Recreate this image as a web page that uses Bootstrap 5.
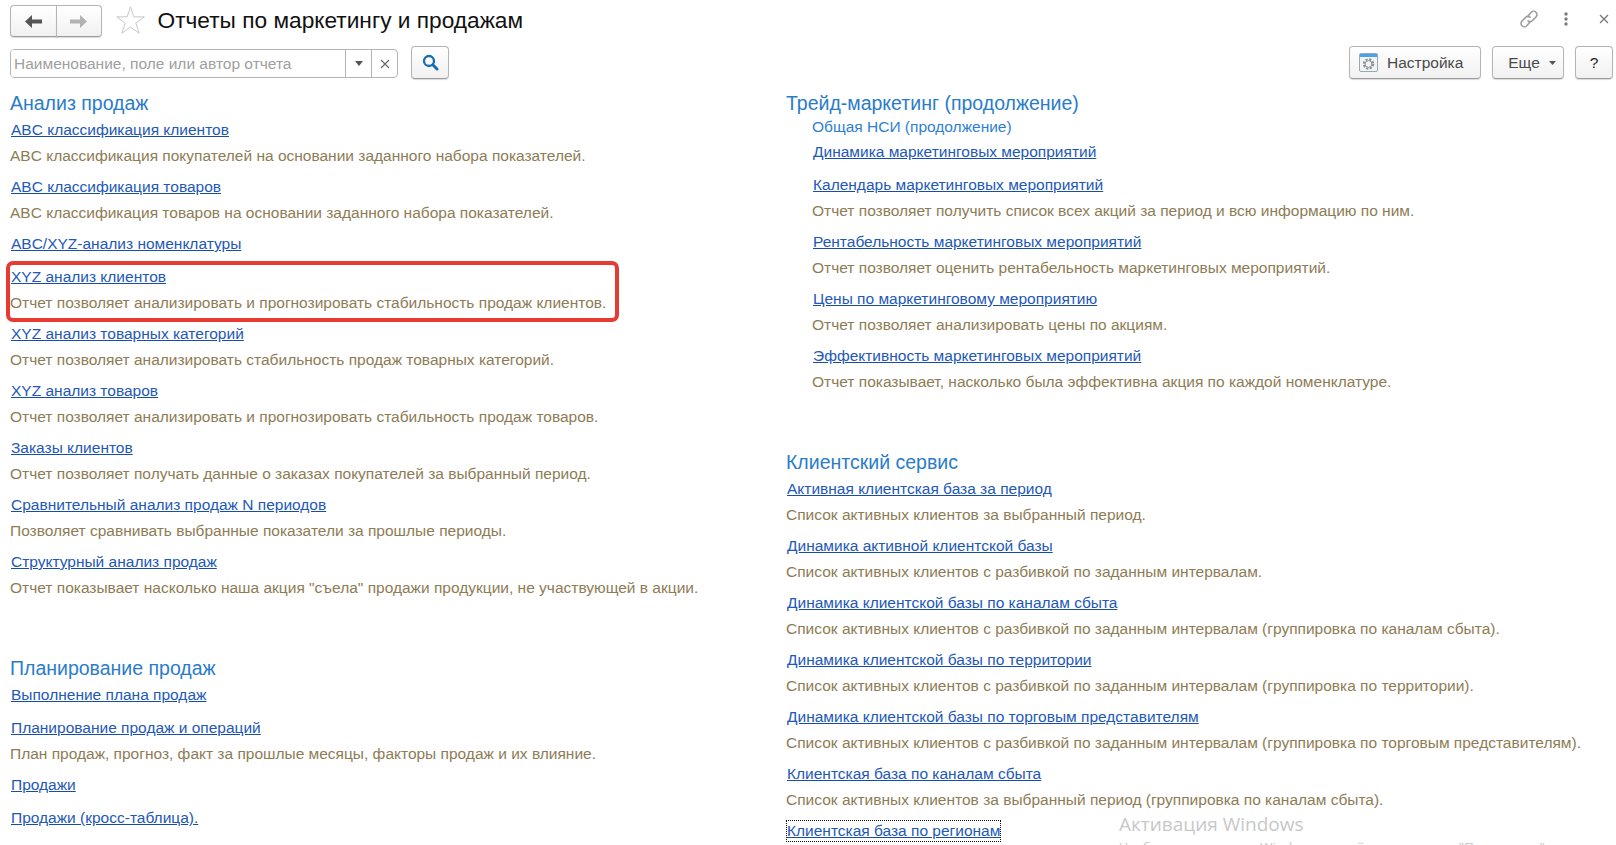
<!DOCTYPE html>
<html lang="ru">
<head>
<meta charset="utf-8">
<title>Отчеты по маркетингу и продажам</title>
<link href="https://cdn.jsdelivr.net/npm/bootstrap@5.3.0/dist/css/bootstrap.min.css" rel="stylesheet">
<style>
html,body{height:845px;overflow:hidden;background:#fff}
body{font-family:"Liberation Sans",Arial,sans-serif;font-size:15.5px;position:relative}
.top-bar{height:46px;padding:5px 7px 0 10px}
.ghost-btn{background:linear-gradient(#fff,#f1f1f1);border:1px solid #b4b4b4;border-bottom-color:#9c9c9c;border-radius:4px;box-shadow:0 1px 1px rgba(0,0,0,.15);color:#4a4a4a;font-size:15.5px;padding:0;display:inline-flex;align-items:center;justify-content:center}
.nav-pair{width:92px;height:32px}
.nav-pair .ghost-btn{flex:1 1 0;height:32px}
.nav-pair .ghost-btn:first-child{border-radius:4px 0 0 4px}
.nav-pair .ghost-btn:last-child{border-radius:0 4px 4px 0;margin-left:-1px}
.fav-star{margin:1px 12.5px 0 14px}
.page-title{font-size:22.7px;font-weight:400;color:#111;margin:-1px 0 0;line-height:32px}
.head-tools{margin-left:auto;padding-top:4px}
.tool-dots{margin-left:24px}
.tool-close{margin-left:30px}
.filter-bar{height:40px;padding:0 3px 0 10px;align-items:flex-start}
.find-box{width:388px;height:29px;margin-top:3px;border:1px solid #b4b4b4;border-radius:4px;background:#fff;overflow:hidden}
.find-box input{flex:1 1 auto;min-width:0;border:0;outline:0;padding:0 3px;font-size:15.5px;font-family:inherit;color:#333}
.find-box input::placeholder{color:#a0a0a0;opacity:1}
.find-cell{width:26px;border-left:1px solid #b4b4b4;color:#555}
.find-go{width:38px;height:33px;margin:0 0 0 13px}
.tune-btn{width:132px;height:33px;gap:9px;padding-left:9px;justify-content:flex-start}
.more-btn{width:72px;height:33px;margin-left:11px;gap:9px;padding-left:8px}
.help-btn{width:38px;height:33px;margin-left:11px;color:#222}
.report-area{padding-top:5px}
.pane-left{width:786px;padding-left:10px;flex:none}
.pane-right{flex:1 1 auto;min-width:0}
.sect{margin-bottom:54px}
.sect:last-child{margin-bottom:0}
.sect-title{font-size:19.5px;line-height:24px;color:#2a7ccb;font-weight:400;margin:0 0 5px}
.sub-title{font-size:15.5px;line-height:20px;color:#2f7fd0;margin:-3px 0 5px 26px}
.rep-item{margin-bottom:7px;position:relative;padding-left:1px}
.rep-item:last-child{margin-bottom:0}
.rep-item.shift{padding-left:27px}
.rep-link{display:inline-block;line-height:20px;color:#2358b8;text-decoration:underline;text-decoration-color:#164da6;margin-bottom:6px;vertical-align:top}
.rep-text{line-height:20px;color:#8d7c55;margin:0 0 0 -1px;padding-bottom:4px;white-space:nowrap}
.marked::after{content:"";position:absolute;left:-4px;top:-6px;width:613px;height:61px;border:4px solid #e83a30;border-radius:7px;pointer-events:none}
.focused{outline:1px dotted #111;outline-offset:0;margin-bottom:0}
.activation{position:absolute;left:1119px;top:811px;color:#c8c8c8;font-family:"Open Sans",sans-serif;pointer-events:none}
.activation-head{font-size:19px;line-height:26px}
.activation-sub{font-size:13.5px;line-height:20px;white-space:nowrap}
</style>
</head>
<body>
<div class="top-bar d-flex align-items-start">
  <div class="nav-pair d-flex">
    <button class="ghost-btn" type="button" aria-label="Назад"><svg width="17" height="13" viewBox="0 0 17 13"><path d="M0 6.500 7 0v4.500h10v4H7V13z" fill="#555"/></svg></button>
    <button class="ghost-btn" type="button" aria-label="Вперед"><svg width="17" height="13" viewBox="0 0 17 13"><path d="M17 6.500 10 0v4.500H0v4h10V13z" fill="#b2b2b2"/></svg></button>
  </div>
  <svg class="fav-star" width="29" height="28" viewBox="0 0 29 28"><path d="M14.500 .8l3.300 10 10.500.1-8.500 6.200 3.300 10.100-8.600-6.200-8.600 6.200 3.300-10.100-8.500-6.200 10.500-.1z" fill="#fff" stroke="#c8c8c8" stroke-width="1"/></svg>
  <h1 class="page-title">Отчеты по маркетингу и продажам</h1>
  <div class="head-tools d-flex align-items-center">
    <svg width="20" height="20" viewBox="0 0 20 20" fill="none" stroke="#9c9c9c" stroke-width="1.600" stroke-linecap="round"><path d="M9 7 12.200 3.200a3.400 3.400 0 0 1 4.800 0 3.400 3.400 0 0 1 0 4.800L13.500 11.500a3.400 3.400 0 0 1-4.500.3"/><path d="M11 13 7.800 16.800a3.400 3.400 0 0 1-4.800 0 3.400 3.400 0 0 1 0-4.800L6.500 8.500a3.400 3.400 0 0 1 4.500-.3"/></svg>
    <svg class="tool-dots" width="6" height="14" viewBox="0 0 6 14" fill="#7c7c7c"><circle cx="3" cy="2" r="1.700"/><circle cx="3" cy="7" r="1.700"/><circle cx="3" cy="12" r="1.700"/></svg>
    <svg class="tool-close" width="10" height="10" viewBox="0 0 10 10" stroke="#7c7c7c" stroke-width="1.400"><path d="M1 1l8 8M9 1L1 9"/></svg>
  </div>
</div>
<div class="filter-bar d-flex">
  <div class="find-box d-flex">
    <input type="text" placeholder="Наименование, поле или автор отчета" aria-label="Поиск">
    <span class="find-cell d-flex align-items-center justify-content-center"><svg width="8" height="5" viewBox="0 0 8 5"><path d="M0 0h8L4 5z" fill="#555"/></svg></span>
    <span class="find-cell d-flex align-items-center justify-content-center"><svg width="10" height="10" viewBox="0 0 10 10" stroke="#666" stroke-width="1.100"><path d="M1 1l8 8M9 1L1 9"/></svg></span>
  </div>
  <button class="ghost-btn find-go" type="button" aria-label="Найти"><svg width="17" height="17" viewBox="0 0 17 17" fill="none" stroke="#1b6cae"><circle cx="7" cy="7" r="5" stroke-width="2.300"/><path d="M10.800 10.800 15 15" stroke-width="3" stroke-linecap="round"/></svg></button>
  <div class="ms-auto d-flex">
    <button class="ghost-btn tune-btn" type="button"><svg width="19" height="19" viewBox="0 0 19 19"><rect x=".5" y=".5" width="18" height="18" rx="1.500" fill="#f1f3f5" stroke="#9aa6b0"/><path d="M1 1h17v3H1z" fill="#4aa3e8"/><circle cx="9.500" cy="11" r="4.700" fill="none" stroke="#8b8f93" stroke-width="2" stroke-dasharray="2.200 1.500"/><circle cx="9.500" cy="11" r="3.400" fill="none" stroke="#8b8f93"/></svg>Настройка</button>
    <button class="ghost-btn more-btn" type="button">Еще<svg width="7" height="4" viewBox="0 0 7 4"><path d="M0 0h7L3.500 4z" fill="#555"/></svg></button>
    <button class="ghost-btn help-btn" type="button">?</button>
  </div>
</div>
<div class="report-area d-flex">
  <div class="pane-left">
    <section class="sect">
      <h2 class="sect-title">Анализ продаж</h2>
      <div class="rep-item"><a class="rep-link" href="#">ABC классификация клиентов</a><p class="rep-text">ABC классификация покупателей на основании заданного набора показателей.</p></div>
      <div class="rep-item"><a class="rep-link" href="#">ABC классификация товаров</a><p class="rep-text">ABC классификация товаров на основании заданного набора показателей.</p></div>
      <div class="rep-item"><a class="rep-link" href="#">ABC/XYZ-анализ номенклатуры</a></div>
      <div class="rep-item marked"><a class="rep-link" href="#">XYZ анализ клиентов</a><p class="rep-text">Отчет позволяет анализировать и прогнозировать стабильность продаж клиентов.</p></div>
      <div class="rep-item"><a class="rep-link" href="#">XYZ анализ товарных категорий</a><p class="rep-text">Отчет позволяет анализировать стабильность продаж товарных категорий.</p></div>
      <div class="rep-item"><a class="rep-link" href="#">XYZ анализ товаров</a><p class="rep-text">Отчет позволяет анализировать и прогнозировать стабильность продаж товаров.</p></div>
      <div class="rep-item"><a class="rep-link" href="#">Заказы клиентов</a><p class="rep-text">Отчет позволяет получать данные о заказах покупателей за выбранный период.</p></div>
      <div class="rep-item"><a class="rep-link" href="#">Сравнительный анализ продаж N периодов</a><p class="rep-text">Позволяет сравнивать выбранные показатели за прошлые периоды.</p></div>
      <div class="rep-item"><a class="rep-link" href="#">Структурный анализ продаж</a><p class="rep-text">Отчет показывает насколько наша акция "съела" продажи продукции, не участвующей в акции.</p></div>
    </section>
    <section class="sect">
      <h2 class="sect-title">Планирование продаж</h2>
      <div class="rep-item"><a class="rep-link" href="#">Выполнение плана продаж</a></div>
      <div class="rep-item"><a class="rep-link" href="#">Планирование продаж и операций</a><p class="rep-text">План продаж, прогноз, факт за прошлые месяцы, факторы продаж и их влияние.</p></div>
      <div class="rep-item"><a class="rep-link" href="#">Продажи</a></div>
      <div class="rep-item"><a class="rep-link" href="#">Продажи (кросс-таблица).</a></div>
    </section>
  </div>
  <div class="pane-right">
    <section class="sect">
      <h2 class="sect-title">Трейд-маркетинг (продолжение)</h2>
      <div class="sub-title">Общая НСИ (продолжение)</div>
      <div class="rep-item shift"><a class="rep-link" href="#">Динамика маркетинговых мероприятий</a></div>
      <div class="rep-item shift"><a class="rep-link" href="#">Календарь маркетинговых мероприятий</a><p class="rep-text">Отчет позволяет получить список всех акций за период и всю информацию по ним.</p></div>
      <div class="rep-item shift"><a class="rep-link" href="#">Рентабельность маркетинговых мероприятий</a><p class="rep-text">Отчет позволяет оценить рентабельность маркетинговых мероприятий.</p></div>
      <div class="rep-item shift"><a class="rep-link" href="#">Цены по маркетинговому мероприятию</a><p class="rep-text">Отчет позволяет анализировать цены по акциям.</p></div>
      <div class="rep-item shift"><a class="rep-link" href="#">Эффективность маркетинговых мероприятий</a><p class="rep-text">Отчет показывает, насколько была эффективна акция по каждой номенклатуре.</p></div>
    </section>
    <section class="sect">
      <h2 class="sect-title">Клиентский сервис</h2>
      <div class="rep-item"><a class="rep-link" href="#">Активная клиентская база за период</a><p class="rep-text">Список активных клиентов за выбранный период.</p></div>
      <div class="rep-item"><a class="rep-link" href="#">Динамика активной клиентской базы</a><p class="rep-text">Список активных клиентов с разбивкой по заданным интервалам.</p></div>
      <div class="rep-item"><a class="rep-link" href="#">Динамика клиентской базы по каналам сбыта</a><p class="rep-text">Список активных клиентов с разбивкой по заданным интервалам (группировка по каналам сбыта).</p></div>
      <div class="rep-item"><a class="rep-link" href="#">Динамика клиентской базы по территории</a><p class="rep-text">Список активных клиентов с разбивкой по заданным интервалам (группировка по территории).</p></div>
      <div class="rep-item"><a class="rep-link" href="#">Динамика клиентской базы по торговым представителям</a><p class="rep-text">Список активных клиентов с разбивкой по заданным интервалам (группировка по торговым представителям).</p></div>
      <div class="rep-item"><a class="rep-link" href="#">Клиентская база по каналам сбыта</a><p class="rep-text">Список активных клиентов за выбранный период (группировка по каналам сбыта).</p></div>
      <div class="rep-item"><a class="rep-link focused" href="#">Клиентская база по регионам</a></div>
    </section>
  </div>
</div>
<div class="activation">
  <div class="activation-head">Активация Windows</div>
  <div class="activation-sub">Чтобы активировать Windows, перейдите в раздел "Параметры".</div>
</div>
<script src="https://cdn.jsdelivr.net/npm/bootstrap@5.3.0/dist/js/bootstrap.bundle.min.js"></script>
</body>
</html>
